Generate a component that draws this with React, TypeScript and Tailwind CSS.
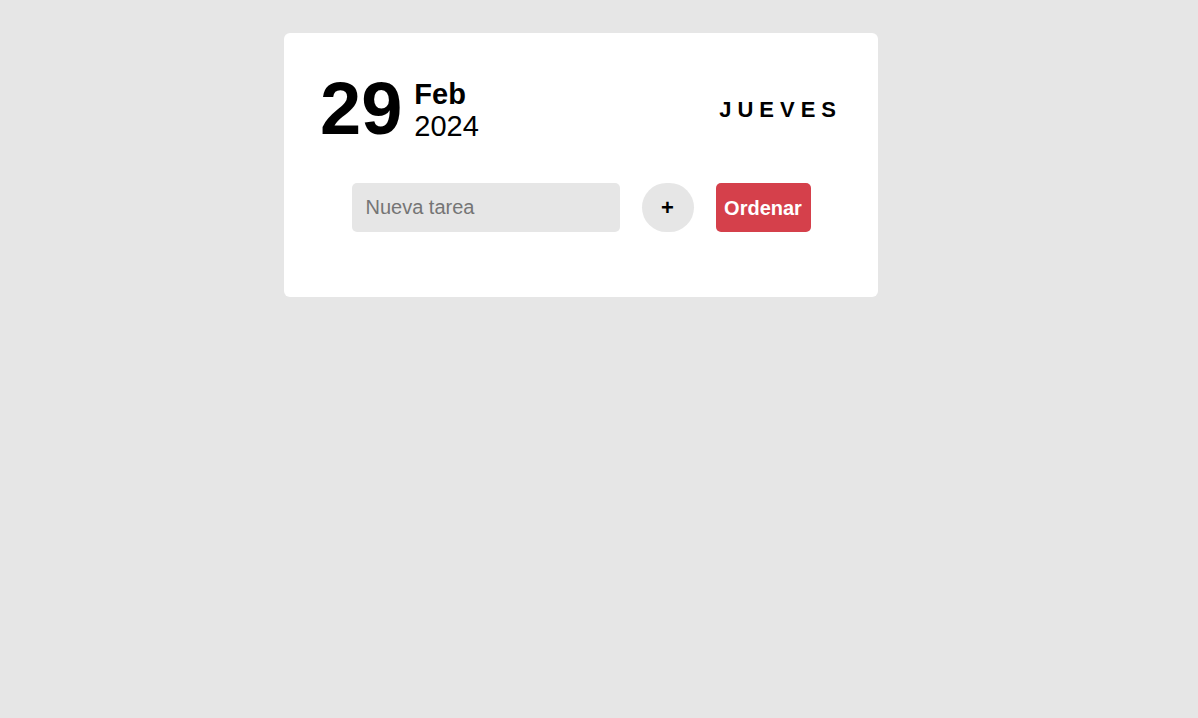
export default function App() {
  return (
    <div
      className="min-h-[718px] w-full bg-[#e6e6e6] pt-[33px]"
      style={{ fontFamily: '"Liberation Sans", Arial, sans-serif' }}
    >
      <div className="ml-[284px] w-[594px] h-[264px] rounded-[6px] bg-white px-[36px] pt-[39px]">
        <div className="flex items-center justify-between">
          <div className="flex items-end gap-[12px]">
            <div className="text-[74px] font-bold leading-[74px] text-black">29</div>
            <div className="flex flex-col pb-[4px]">
              <span className="text-[29px] font-bold leading-[32px] text-black">Feb</span>
              <span className="text-[29px] leading-[32px] text-black">2024</span>
            </div>
          </div>
          <div className="pt-[2px] text-[22px] font-bold tracking-[6px] text-black leading-none">JUEVES</div>
        </div>
        <div className="mt-[37px] flex items-center justify-center gap-[22px]">
          <input
            placeholder="Nueva tarea"
            className="h-[49px] w-[268px] rounded-[5px] bg-[#e6e6e6] px-[14px] text-[20px] text-black outline-none placeholder:text-[#757575]"
          />
          <button className="flex h-[49px] w-[52px] items-center justify-center rounded-full bg-[#e6e6e6] text-[22px] font-bold text-black">
            +
          </button>
          <button className="h-[49px] w-[95px] rounded-[5px] bg-[#d5404b] text-[20px] font-bold text-white">
            Ordenar
          </button>
        </div>
      </div>
    </div>
  );
}
